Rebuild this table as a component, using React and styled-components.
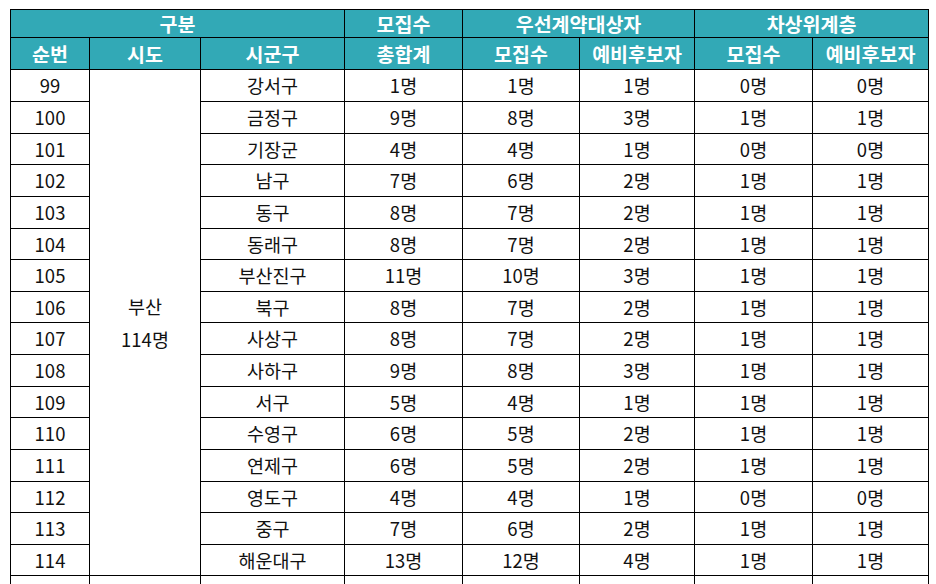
import React from "react";
import styled, { createGlobalStyle } from "styled-components";

const GlobalStyle = createGlobalStyle`
  html, body {
    margin: 0;
    padding: 0;
    background: #fff;
    overflow: hidden;
  }
  body {
    font-family: "Noto Sans CJK KR", "Noto Sans", sans-serif;
  }
`;

const Page = styled.div`
  padding: 9px 0 0 10px;
`;

const Table = styled.table`
  border-collapse: collapse;
  table-layout: fixed;
  width: 919px;
`;

const HeadCell = styled.th`
  background: #32a9b6;
  color: #fff;
  font-size: 19.5px;
  font-weight: 700;
  border: 1px solid #000;
  padding: 0;
  height: ${(p) => (p.$tall ? "31px" : "27px")};
  text-align: center;
  vertical-align: middle;
  line-height: 1;
`;

const Cell = styled.td`
  border: 1px solid #000;
  padding: 0;
  height: ${(p) => (p.$short ? "30px" : "31px")};
  text-align: center;
  vertical-align: middle;
  font-size: 18.5px;
  color: #111;
  line-height: 1;
`;

const RegionCell = styled(Cell)`
  line-height: 33px;
`;

const rows = [
  [99, "강서구", 1, 1, 1, 0, 0],
  [100, "금정구", 9, 8, 3, 1, 1],
  [101, "기장군", 4, 4, 1, 0, 0],
  [102, "남구", 7, 6, 2, 1, 1],
  [103, "동구", 8, 7, 2, 1, 1],
  [104, "동래구", 8, 7, 2, 1, 1],
  [105, "부산진구", 11, 10, 3, 1, 1],
  [106, "북구", 8, 7, 2, 1, 1],
  [107, "사상구", 8, 7, 2, 1, 1],
  [108, "사하구", 9, 8, 3, 1, 1],
  [109, "서구", 5, 4, 1, 1, 1],
  [110, "수영구", 6, 5, 2, 1, 1],
  [111, "연제구", 6, 5, 2, 1, 1],
  [112, "영도구", 4, 4, 1, 0, 0],
  [113, "중구", 7, 6, 2, 1, 1],
  [114, "해운대구", 13, 12, 4, 1, 1],
];

const widths = [79, 111, 144, 118, 117, 115, 118, 116];
const shortRows = [2, 5, 7, 10, 13, 15];

export default function App() {
  return (
    <Page>
      <GlobalStyle />
      <Table>
        <colgroup>
          {widths.map((w, i) => (
            <col key={i} style={{ width: w }} />
          ))}
        </colgroup>
        <thead>
          <tr>
            <HeadCell colSpan={3}>구분</HeadCell>
            <HeadCell>모집수</HeadCell>
            <HeadCell colSpan={2}>우선계약대상자</HeadCell>
            <HeadCell colSpan={2}>차상위계층</HeadCell>
          </tr>
          <tr>
            <HeadCell $tall>순번</HeadCell>
            <HeadCell $tall>시도</HeadCell>
            <HeadCell $tall>시군구</HeadCell>
            <HeadCell $tall>총합계</HeadCell>
            <HeadCell $tall>모집수</HeadCell>
            <HeadCell $tall>예비후보자</HeadCell>
            <HeadCell $tall>모집수</HeadCell>
            <HeadCell $tall>예비후보자</HeadCell>
          </tr>
        </thead>
        <tbody>
          {rows.map((r, i) => {
            const short = shortRows.includes(i);
            return (
              <tr key={r[0]}>
                <Cell $short={short}>{r[0]}</Cell>
                {i === 0 && (
                  <RegionCell rowSpan={rows.length}>
                    부산
                    <br />
                    114명
                  </RegionCell>
                )}
                <Cell $short={short}>{r[1]}</Cell>
                {r.slice(2).map((n, j) => (
                  <Cell key={j} $short={short}>
                    {n}명
                  </Cell>
                ))}
              </tr>
            );
          })}
          <tr>
            {widths.map((_, i) => (
              <Cell key={i} />
            ))}
          </tr>
        </tbody>
      </Table>
    </Page>
  );
}
